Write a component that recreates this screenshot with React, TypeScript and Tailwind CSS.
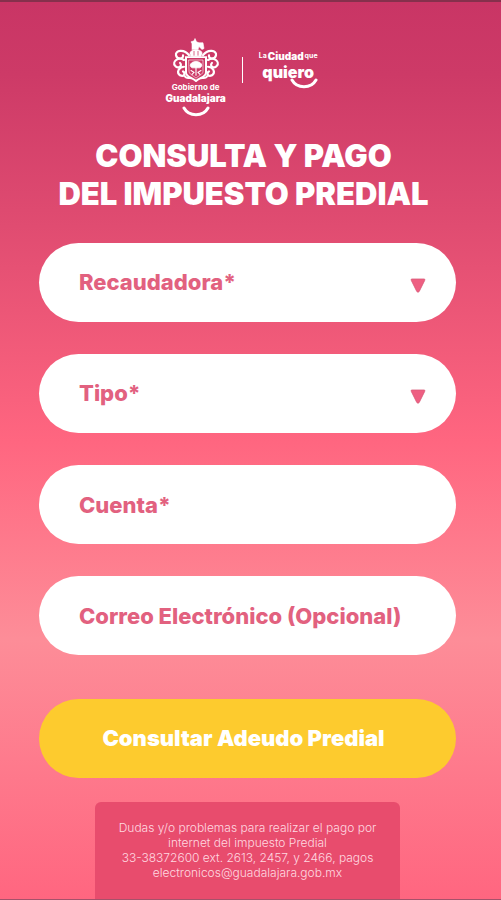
import { useState } from "react";

const collectors = ["Recaudadora 1", "Recaudadora 2", "Recaudadora 3"];
const propertyTypes = ["Urbano", "Rústico"];

const fieldClass =
  "block w-full h-[79px] rounded-full bg-white px-10 text-[22px] font-extrabold text-[#e2617f] outline-none";

function CityCrest() {
  return (
    <svg viewBox="0 0 48 46" preserveAspectRatio="none" className="w-12 h-11" fill="none" stroke="#fff" strokeLinecap="round">
      {/* helmet and flag */}
      <path d="M20 12 L20 6 L19 4 L22 3 L23 0.500 L24.500 4 L27 5 L31 5 L32 11 L30 12 L27 9 L26 12 Z" fill="#fff" strokeWidth="0.6" />
      <path d="M18 16 C18 11 30 11 30 16 L29 19 L19 19 Z" fill="#fff" strokeWidth="0.8" />
      <path d="M22 14 V18 M26 14 V18" stroke="#cf3d69" strokeWidth="0.8" />
      {/* foliage */}
      <g strokeWidth="2.2">
        <path d="M17 18 C12 11 3 13 4 18 C5 23 12 22 11 18" />
        <path d="M31 18 C36 11 45 13 44 18 C43 23 36 22 37 18" />
        <path d="M12 23 C6 19 0 25 3 29 C6 33 11 29 8 26" />
        <path d="M36 23 C42 19 48 25 45 29 C42 33 37 29 40 26" />
        <path d="M12 30 C7 30 4 36 8 39 C12 41 14 37 11 35" />
        <path d="M36 30 C41 30 44 36 40 39 C36 41 34 37 37 35" />
        <path d="M13 40 C14 43 18 41 19 42 M35 40 C34 43 30 41 29 42" />
      </g>
      {/* shield */}
      <path d="M14 20 H34 V36 C34 41 28 41 24 45 C20 41 14 41 14 36 Z" strokeWidth="2" />
      <path d="M17 23 H31 V35 C31 38 27 39 24 42 C21 39 17 38 17 35 Z" strokeWidth="0.6" />
      <path d="M20 31 C16 29 19 24.500 24 24.500 C29 24.500 32 29 28 31 Z" fill="#fff" strokeWidth="0.8" />
      <path d="M24 30 V39 M19 34 L22 36 L20 38 M29 34 L26 36 L28 38" strokeWidth="1.1" />
    </svg>
  );
}

function Smile() {
  return (
    <svg viewBox="0 0 28 11" className="w-7 h-[11px]" fill="none">
      <path d="M2 2 C7 11 21 11 26 2" stroke="#fff" strokeWidth="3" strokeLinecap="round" />
    </svg>
  );
}

function Arrow() {
  return (
    <svg
      viewBox="0 0 16 16"
      className="pointer-events-none absolute right-[30px] top-1/2 mt-[-5px] size-4"
      fill="#ee5f82"
      stroke="#d95a78"
      strokeLinejoin="round"
    >
      <path d="M2 1 H14 Q15.500 1 14.700 2.400 L9.200 13.500 Q8 15 6.800 13.500 L1.300 2.400 Q0.500 1 2 1 Z" strokeWidth="0.8" />
    </svg>
  );
}

type SelectFieldProps = {
  label: string;
  options: string[];
  value: string;
  onChange: (value: string) => void;
};

function SelectField({ label, options, value, onChange }: SelectFieldProps) {
  return (
    <div className="relative">
      <select
        aria-label={label}
        value={value}
        onChange={(e) => onChange(e.target.value)}
        className={`${fieldClass} appearance-none`}
      >
        <option value="">{label}</option>
        {options.map((option) => (
          <option key={option} value={option}>
            {option}
          </option>
        ))}
      </select>
      <Arrow />
    </div>
  );
}

export default function App() {
  const [collector, setCollector] = useState("");
  const [propertyType, setPropertyType] = useState("");

  return (
    <div className="flex min-h-screen flex-col border-t-2 border-b border-t-[#86304c] border-b-[#a5526a] bg-linear-[180deg,#c93565_0%,#cd3a67_8%,#e04c71_25%,#ff6680_49%,#fd8d98_71%,#ff6680_100%] pl-[39px] pr-[45px] font-['Inter',sans-serif]">
      {/* Logos */}
      <header className="flex items-start justify-center gap-4 pr-3 pt-9">
        <div className="flex flex-col items-center text-white">
          <CityCrest />
          <span className="text-[8px] leading-[10px] font-bold">Gobierno de</span>
          <span className="text-[10px] leading-3 font-black">Guadalajara</span>
          <div className="pt-0.5">
            <Smile />
          </div>
        </div>
        <div className="mt-[19px] h-[26px] w-px bg-white" />
        <div className="flex flex-col items-center pt-3 text-white">
          <div className="flex items-center gap-px leading-3">
            <span className="text-[7px] font-bold">La</span>
            <span className="text-[10px] font-black">Ciudad</span>
            <span className="text-[7px] font-bold">que</span>
          </div>
          <span className="text-[16px] leading-5 font-black">quiero</span>
          <div className="-mt-1 self-end">
            <Smile />
          </div>
        </div>
      </header>

      <h1 className="pr-2 pt-5 text-center text-[31px] leading-[38px] font-black whitespace-nowrap text-white">
        CONSULTA Y PAGO
        <br />
        DEL IMPUESTO PREDIAL
      </h1>

      <form className="flex flex-col gap-8 pt-[30px]" onSubmit={(e) => e.preventDefault()}>
        <SelectField label="Recaudadora*" options={collectors} value={collector} onChange={setCollector} />
        <SelectField label="Tipo*" options={propertyTypes} value={propertyType} onChange={setPropertyType} />
        <input
          type="text"
          aria-label="Cuenta*"
          placeholder="Cuenta*"
          required
          className={`${fieldClass} placeholder:text-[#e2617f]`}
        />
        <input
          type="email"
          aria-label="Correo Electrónico (Opcional)"
          placeholder="Correo Electrónico (Opcional)"
          className={`${fieldClass} placeholder:text-[#e2617f]`}
        />
        <button type="submit" className="mt-3 h-[79px] rounded-full bg-[#fdcb2e] pr-2 text-[22px] font-black text-white">
          Consultar Adeudo Predial
        </button>
      </form>

      {/* Help */}
      <footer className="mx-14 mt-6 grow rounded-t-md bg-[#e84c6d] pt-[18px] pb-4 text-center text-[12px] leading-[15px] font-light whitespace-nowrap text-[#ffd9e0]">
        Dudas y/o problemas para realizar el pago por
        <br />
        internet del impuesto Predial
        <br />
        33-38372600 ext. 2613, 2457, y 2466, pagos
        <br />
        <a href="mailto:electronicos@guadalajara.gob.mx">electronicos@guadalajara.gob.mx</a>
      </footer>
    </div>
  );
}
